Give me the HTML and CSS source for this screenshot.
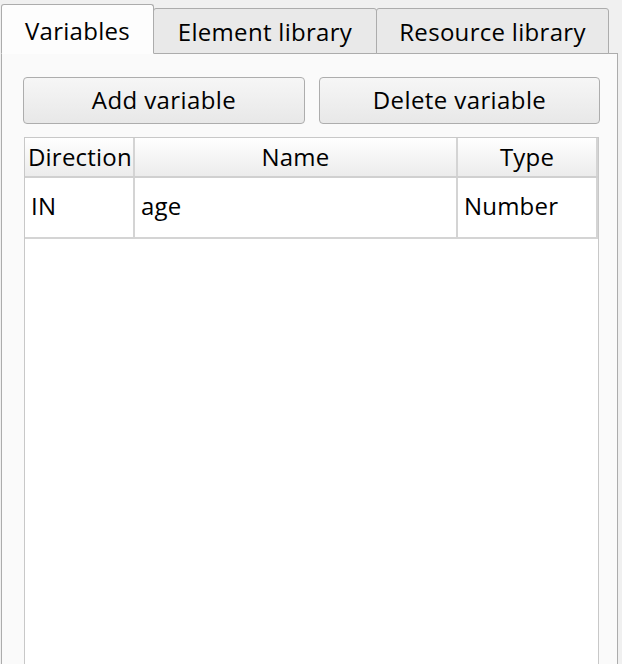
FILE: index.html
```html
<!DOCTYPE html>
<html>
<head>
<meta charset="utf-8">
<link rel="stylesheet" href="styles.css">
</head>
<body>
<div class="window">
  <div class="tabbar">
    <div class="tab tab-active">Variables</div>
    <div class="tab tab-2">Element library</div>
    <div class="tab tab-3">Resource library</div>
  </div>
  <div class="panel">
    <div class="buttons">
      <button class="btn">Add variable</button>
      <button class="btn">Delete variable</button>
    </div>
    <div class="table">
      <div class="thead">
        <div class="th col-dir th-left">Direction</div>
        <div class="th col-name">Name</div>
        <div class="th col-type">Type</div>
      </div>
      <div class="tr">
        <div class="td col-dir">IN</div>
        <div class="td col-name">age</div>
        <div class="td col-type">Number</div>
      </div>
    </div>
  </div>
</div>
</body>
</html>
```
FILE: styles.css
```css
html, body {
  margin: 0;
  padding: 0;
  background: #f0f0f0;
  width: 622px;
  height: 664px;
  overflow: hidden;
}
body {
  font-family: "Open Sans", "Noto Sans", sans-serif;
  font-size: 24px;
  color: #000;
}
.window {
  display: flex;
  flex-direction: column;
  height: 664px;
}
.tabbar {
  flex-shrink: 0;
  display: flex;
  align-items: flex-end;
  height: 54px;
  padding-left: 1px;
  position: relative;
  z-index: 2;
}
.tab {
  box-sizing: border-box;
  border: 1px solid #acacac;
  border-radius: 3px 3px 0 0;
  background: #e9e9e9;
  height: 46px;
  display: flex;
  align-items: center;
  justify-content: center;
  margin-left: -1px;
  padding-top: 1px;
  letter-spacing: 0.3px;
}
.tab-active {
  margin-left: 0;
  width: 153px;
  height: 50px;
  background: #fdfdfd;
  border-bottom: 1px solid #fdfdfd;
  padding-top: 2px;
  padding-bottom: 0;
  position: relative;
  z-index: 3;
}
.tab-2 { width: 224px; }
.tab-3 { width: 233px; }
.panel {
  flex: 1;
  min-height: 0;
  overflow: hidden;
  box-sizing: border-box;
  width: 617px;
  margin-left: 1px;
  margin-top: -1px;
  border: 1px solid #acacac;
  border-bottom: none;
  background: #fafafa;
  padding: 23px 0 0 21px;
  position: relative;
  z-index: 1;
}
.buttons {
  display: flex;
  gap: 14px;
}
.btn {
  box-sizing: border-box;
  width: 282px;
  height: 47px;
  font: inherit;
  letter-spacing: 0.4px;
  color: #000;
  border: 1px solid #adadad;
  border-radius: 4px;
  background: linear-gradient(#f6f6f6, #e8e8e8);
  padding: 0 0 3px 0;
}
.btn + .btn { width: 281px; }
.table {
  box-sizing: border-box;
  margin-top: 13px;
  margin-left: 1px;
  width: 575px;
  height: 600px;
  border: 1px solid #c8c8c8;
  background: #fff;
}
.thead {
  display: flex;
  height: 38px;
  border-bottom: 2px solid #d0d0d0;
  background: linear-gradient(#ffffff, #ececec);
}
.th {
  box-sizing: border-box;
  display: flex;
  align-items: center;
  justify-content: center;
  border-right: 2px solid #d4d4d4;
  padding-bottom: 1px;
  white-space: nowrap;
  overflow: hidden;
  letter-spacing: 0.2px;
}
.th-left {
  justify-content: flex-start;
  padding-left: 3px;
}
.col-dir { width: 110px; }
.col-name { width: 323px; }
.col-type { width: 140px; }
.tr {
  display: flex;
  height: 59px;
  border-bottom: 2px solid #d4d4d4;
}
.td {
  box-sizing: border-box;
  display: flex;
  align-items: center;
  padding-left: 6px;
  border-right: 2px solid #d4d4d4;
  padding-bottom: 5px;
  letter-spacing: 0.2px;
}
```
